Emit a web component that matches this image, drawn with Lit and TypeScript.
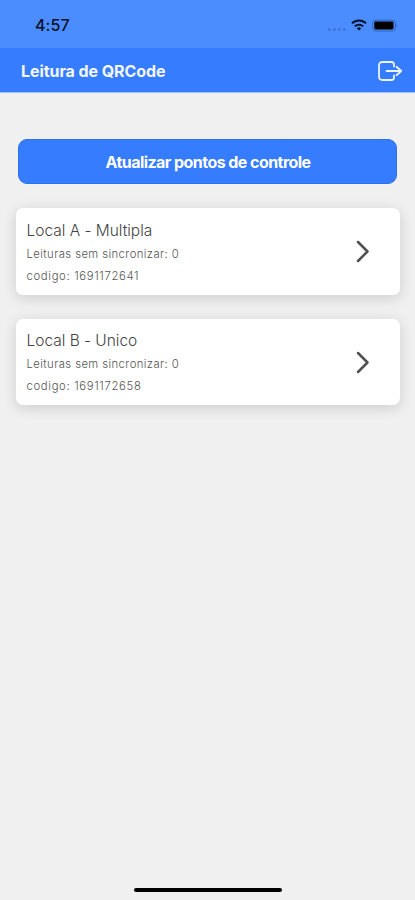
import { LitElement, html, css } from "lit";
import { customElement, property } from "lit/decorators.js";

@customElement("status-bar")
class StatusBar extends LitElement {
  static styles = css`
    :host { display: flex; height: 48px; box-sizing: border-box; background: #4b8dff; padding: 2px 16px 0 35px; align-items: center; justify-content: space-between; }
    .time { font-size: 16px; font-weight: 500; color: #06101f; letter-spacing: 0.1px; line-height: 20px; }
    .icons { display: flex; align-items: center; }
    .icons svg { display: block; }
  `;
  render() {
    return html`
      <span class="time">4:57</span>
      <span class="icons">
        <svg width="72" height="18" viewBox="327 16 72 18">
          <g fill="#3a70c6"><circle cx="329.3" cy="29.5" r="1.3"/><circle cx="334.3" cy="29.5" r="1.3"/><circle cx="339.3" cy="29.5" r="1.3"/><circle cx="344.3" cy="29.5" r="1.3"/></g>
          <g fill="none" stroke="#04142e" stroke-width="2"><path d="M352 23.3a10 10 0 0 1 14 0"/><path d="M354.8 26.4a6 6 0 0 1 8.4 0"/></g>
          <path d="M356.8 28.4a3.2 3.2 0 0 1 4.4 0L359 30.6z" fill="#04142e"/>
          <rect x="372.7" y="20.2" width="22.6" height="10.8" rx="3" fill="none" stroke="#2f62b8" stroke-width="1"/>
          <rect x="374.3" y="21.6" width="19.2" height="7.8" rx="1.4" fill="#000"/>
          <path d="M396.7 23.8q1.6 1.7 0 3.6z" fill="#2f62b8"/>
        </svg>
      </span>`;
  }
}

@customElement("nav-header")
class NavHeader extends LitElement {
  static styles = css`
    :host { display: flex; height: 45px; box-sizing: border-box; background: #367cff; border-bottom: 1px solid #a3c2f8; padding: 1px 12px 0 21px; align-items: center; justify-content: space-between; }
    .title { color: #f2f7ff; font-weight: 700; font-size: 16px; letter-spacing: -0.07px; white-space: nowrap; }
    svg { display: block; }
  `;
  render() {
    return html`
      <span class="title">Leitura de QRCode</span>
      <svg width="26" height="22" viewBox="0 0 26 22" fill="none" stroke="#eaf4ff" stroke-width="1.8" stroke-linecap="round" stroke-linejoin="round">
        <path d="M17 6.5V4.5Q17 2 14.5 2H5.5Q2 2 2 5.5v11Q2 20 5.5 20h9Q17 20 17 17.5v-2M9.5 11h14.5M19.5 6.8L24.3 11l-4.8 4.2"/>
      </svg>`;
  }
}

@customElement("control-point")
class ControlPoint extends LitElement {
  @property() name = "";
  @property() code = "";
  static styles = css`
    :host { display: flex; height: 86.5px; box-sizing: border-box; background: #fff; border-radius: 7px; padding: 11.6px 30px 0 11px; justify-content: space-between; box-shadow: 0 3px 14px rgba(0, 0, 0, 0.15); }
    .name { font-size: 15.5px; line-height: 22px; font-weight: 300; color: #444; letter-spacing: -0.02px; white-space: nowrap; margin-bottom: 1px; }
    .detail { font-size: 11.3px; line-height: 22px; font-weight: 300; color: #555; white-space: nowrap; }
    .pending { letter-spacing: 0.42px; }
    .code { letter-spacing: 0.67px; }
    svg { display: block; margin-top: 20.8px; }
  `;
  render() {
    return html`
      <div>
        <div class="name">${this.name}</div>
        <div class="detail pending">Leituras sem sincronizar: 0</div>
        <div class="detail code">codigo: ${this.code}</div>
      </div>
      <svg width="14" height="23" viewBox="0 0 14 23" fill="none" stroke="#505050" stroke-width="2.5" stroke-linecap="round" stroke-linejoin="round"><path d="M2 2l9.5 9.5L2 21"/></svg>`;
  }
}

@customElement("app-root")
class AppRoot extends LitElement {
  static styles = css`
    :host { display: flex; flex-direction: column; height: 900px; background: #f0f0f0; font-family: Inter, "Liberation Sans", sans-serif; overflow: hidden; }
    main { display: flex; flex-direction: column; flex: 1; padding: 46px 15.5px 0; gap: 24px; }
    button { font: 700 16px/20px Inter, "Liberation Sans", sans-serif; height: 45px; margin: 0 2.5px; padding: 1px 0 0 1px; border: 1px solid #2c72f0; border-radius: 9px; background: #367cff; color: #fff; letter-spacing: -0.55px; }
    .home { align-self: center; width: 148px; height: 4.5px; border-radius: 3px; background: #000; margin-bottom: 8px; }
  `;
  render() {
    return html`
      <status-bar></status-bar>
      <nav-header></nav-header>
      <main>
        <button>Atualizar pontos de controle</button>
        <control-point name="Local A - Multipla" code="1691172641"></control-point>
        <control-point name="Local B - Unico" code="1691172658"></control-point>
      </main>
      <div class="home"></div>`;
  }
}
